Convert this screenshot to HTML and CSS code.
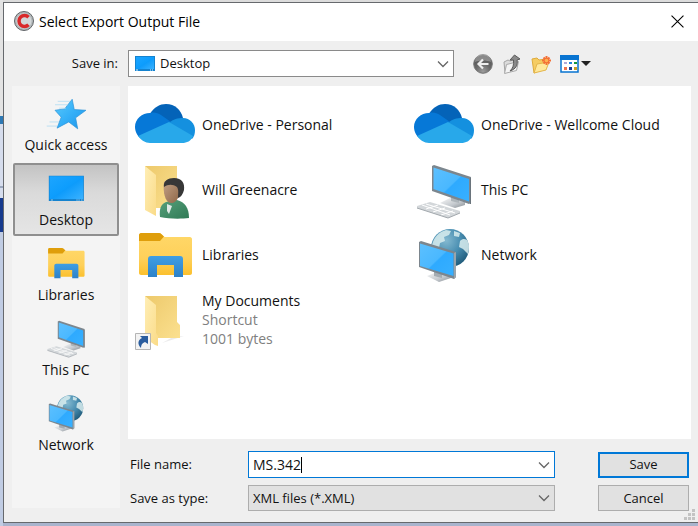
FILE: index.html
```html
<!DOCTYPE html>
<html lang="en">
<head>
<meta charset="utf-8">
<title>Select Export Output File</title>
<link rel="stylesheet" href="styles.css">
</head>
<body>
<svg class="defs" aria-hidden="true">
  <defs>
    <linearGradient id="blue" x1="0" y1="0" x2="1" y2="1"><stop offset="0" stop-color="#1da5ff"/><stop offset=".5" stop-color="#0d9dfd"/><stop offset=".52" stop-color="#0d9bfb"/><stop offset="1" stop-color="#3bb2ff"/></linearGradient>
    <linearGradient id="screen" x1="0" y1="0" x2="1" y2="1"><stop offset="0" stop-color="#5cc0ff"/><stop offset=".5" stop-color="#4ab8ff"/><stop offset=".53" stop-color="#2eaaff"/><stop offset="1" stop-color="#38b0ff"/></linearGradient>
    <linearGradient id="starfill" x1="0" y1="0" x2="1" y2="1"><stop offset="0" stop-color="#5ccafa"/><stop offset=".5" stop-color="#35b0f8"/><stop offset="1" stop-color="#1a93e8"/></linearGradient>
    <linearGradient id="gold" x1="0" y1="0" x2="0" y2="1"><stop offset="0" stop-color="#ffd869"/><stop offset=".6" stop-color="#fed05a"/><stop offset="1" stop-color="#fbc02e"/></linearGradient>
    <linearGradient id="pane" x1="0" y1="0" x2="1" y2="1"><stop offset="0" stop-color="#ffeeb5"/><stop offset="1" stop-color="#fadb88"/></linearGradient>
    <linearGradient id="back" x1="0" y1="0" x2="1" y2="1"><stop offset="0" stop-color="#edc96b"/><stop offset="1" stop-color="#fbe08f"/></linearGradient>
    <linearGradient id="tray" x1="0" y1="0" x2="0" y2="1"><stop offset="0" stop-color="#3f9ee4"/><stop offset="1" stop-color="#2e82c8"/></linearGradient>
    <linearGradient id="metal" x1="0" y1="0" x2="1" y2="1"><stop offset="0" stop-color="#fafafa"/><stop offset=".6" stop-color="#c3c8cd"/><stop offset="1" stop-color="#858b91"/></linearGradient>
    <radialGradient id="globefill" cx=".4" cy=".3" r=".75"><stop offset="0" stop-color="#84b9d0"/><stop offset=".5" stop-color="#4a8fb2"/><stop offset="1" stop-color="#1d5877"/></radialGradient>
    <linearGradient id="skin" x1="0" y1="0" x2="1" y2="1"><stop offset="0" stop-color="#c4a387"/><stop offset="1" stop-color="#8b6344"/></linearGradient>
    <linearGradient id="shirt" x1="0" y1="0" x2="1" y2="1"><stop offset="0" stop-color="#57a07b"/><stop offset="1" stop-color="#2f7a55"/></linearGradient>
    <radialGradient id="ball" cx=".5" cy=".9" r=".8"><stop offset="0" stop-color="#9c9c9c"/><stop offset=".5" stop-color="#6a6a6a"/><stop offset="1" stop-color="#555"/></radialGradient>
  </defs>
  <symbol id="cloud" viewBox="0 0 64 64">
    <path d="M17 21C21 14 27 11 33 11c9 0 15 6 17 14L36 32 17 23z" fill="#0463b8"/>
    <path d="M17 20c4-1 8 0 11 2l10 7-29 17C5 44 2 39 2 34c0-8 7-14 15-14z" fill="#0678d7"/>
    <path d="M50 25c7 0 12 6 12 12 0 4-1 7-3 9L36 30c4-4 9-5 14-5z" fill="#1490df"/>
    <path d="M36 29l24 14c-2 5-6 7-11 7H17c-5 0-9-3-12-7z" fill="#28a8ea"/>
  </symbol>
  <symbol id="folder-open" viewBox="0 0 64 64">
    <path d="M40 49l11-1-22 7z" fill="#ddd" opacity=".6"/>
    <path d="M12 8h32v26l3 3v13H20z" fill="url(#back)"/>
    <path d="M12 8l11 9v28l2 3v10l-3-1-10-7z" fill="url(#pane)"/>
  </symbol>
  <symbol id="user" viewBox="0 0 64 64">
    <path d="M12 8h32v42H20z" fill="url(#back)"/>
    <path d="M12 8l11 9v41l-11-6z" fill="url(#pane)"/>
    <path d="M27 59c-1-8 1-13 6-15l11-2c8 2 12 8 12 18-8 1-20 1-29-1z" fill="url(#shirt)"/>
    <path d="M34 46l5 2-3 8-2-3z" fill="#dfe9e6"/>
    <path d="M31 24c2-3 15-3 17 2 1 5-1 12-5 17-2 2-5 3-8 1-4-4-5-13-4-20z" fill="url(#skin)"/>
    <path d="M31 29c-1-6 4-9 10-9 8 0 11 5 10 12-1 4-3 7-6 8 0-4 1-8-1-11-4-3-9-3-13 0z" fill="#373737"/>
  </symbol>
  <symbol id="libraries" viewBox="0 0 64 64">
    <path d="M6 12c0-1 1-2 2-2h18c3 0 4 4 6 4h25c1 0 2 1 2 2v34c0 1-1 2-2 2H8c-1 0-2-1-2-2z" fill="url(#gold)"/>
    <path d="M6 17v-5c0-1 1-2 2-2h18c2 0 3 2 5 3.500L27 18H6z" fill="#df9e0b"/>
    <path d="M15 54V36c0-2 1-3 3-3h29c2 0 3 1 3 3v18h-9V42H24v12z" fill="url(#tray)"/>
  </symbol>
  <symbol id="pc" viewBox="0 0 64 64">
    <path d="M28 45l10-5 15 4v3l-10 3z" fill="url(#metal)"/>
    <path d="M39 38l8 2v5l-8-2z" fill="#aeb5ba"/>
    <path d="M20 8l2-1 37 12v26l-2 1-37-13z" fill="#7c868e"/>
    <path d="M21.500 9.500L57 21v22.500L21.500 31z" fill="url(#screen)"/>
    <path d="M58 20h1v26l-1 0z" fill="#6a747c"/>
    <path d="M5 48l13-4 30 9v2l-12 5-31-10z" fill="#d3d7da"/>
    <path d="M10 47l28 10M14 46l29 9M14 51l12-4M21 54l12-4M29 57l12-4" stroke="#fff" fill="none"/>
    <path d="M5 50l31 10 12-5" stroke="#a2a8ad" fill="none"/>
  </symbol>
  <symbol id="network" viewBox="0 0 64 64">
    <circle cx="38" cy="25" r="19" fill="url(#globefill)"/>
    <path d="M20 22c2-8 7-13 14-15l5 1-2 4-5 2 1 4-5 2-1 5-5 2zM42 8l6 2-1 4-5-1zM48 18c3-3 5-2 7-1 3 5 2 10 1 14l-5-5-4-2z" fill="#d9edef" opacity=".85"/>
    <path d="M15 53l10-4 14 4v2l-12 4z" fill="url(#metal)"/>
    <path d="M22 48l8 3v4l-8-2z" fill="#a4acb2"/>
    <path d="M7 19l2-1 35 11v25l-2 2L7 44z" fill="#7c868e"/>
    <path d="M8 20.500l33.500 10V53L8 43z" fill="url(#screen)"/>
    <path d="M42 30l2-1v25l-2 2z" fill="#9aa4ab"/>
  </symbol>
  <symbol id="desktop" viewBox="0 0 64 64">
    <path d="M7 14h51v37H7z" fill="#1583cf"/>
    <path d="M8 15h49v33H8z" fill="url(#blue)"/>
    <path d="M10 49.500h3M47 49.500h2M50 49.500h2M54 49.500h2" stroke="#d9f0ff"/>
  </symbol>
  <symbol id="star" viewBox="0 0 64 64">
    <path d="M41 12l3 15 17 1-15 11 3 16-13-10-17 9 6-16-9-10 14-2z" fill="url(#starfill)" stroke="#2a92d8"/>
    <path d="M20 15h18M16 20h19M22 25h10M8 45h14M4 51h15" stroke="#a3d8f2"/>
  </symbol>
  <symbol id="chevron" viewBox="0 0 12 12"><path d="M1 3.500l5 5 5-5" fill="none" stroke="#666" stroke-width="1.300"/></symbol>
</svg>

<div class="window">
  <header class="titlebar">
    <svg class="logo" viewBox="0 0 20 20" aria-hidden="true"><circle cx="10" cy="10" r="9.500" fill="#b4babc" stroke="#626568"/><circle cx="10" cy="10" r="7.500" fill="#d3d7d9"/><path d="M14.500 6.200a5.500 5.500 0 1 0 0 7.600" fill="none" stroke="#d9292b" stroke-width="3.500"/></svg>
    <h1>Select Export Output File</h1>
    <button class="close" type="button" aria-label="Close"><svg viewBox="0 0 12 12"><path d="M.500.500l11 11M11.500.500l-11 11" stroke="#000"/></svg></button>
  </header>

  <form class="dialog">
    <label class="look-label" for="look">Save in:</label>
    <div class="toolbar">
      <div class="combo look">
        <svg class="combo-icon" viewBox="0 0 20 15" aria-hidden="true"><path d="M0 0h20v15H0z" fill="#1583cf"/><path d="M1 1h18v12H1z" fill="url(#blue)"/><path d="M1 14h2M15 14h1M17 14h1" stroke="#d9f0ff"/></svg>
        <select id="look"><option>Desktop</option></select>
        <svg class="arrow" aria-hidden="true"><use href="#chevron"/></svg>
      </div>
      <div class="tools">
        <button type="button" aria-label="Back"><svg viewBox="0 0 20 20"><circle cx="10" cy="10" r="9.300" fill="url(#ball)" stroke="#777"/><path d="M2 8a8 8 0 0 1 16 0c-5-2-11-2-16 0z" fill="#b5b5b5" opacity=".55"/><path d="M15.500 10H6M10 5.500L5.500 10l4.500 4.500" fill="none" stroke="#eee" stroke-width="2.200"/></svg></button>
        <button type="button" aria-label="Up one level"><svg viewBox="0 0 20 20"><path d="M2 8l4-2 2 1 5-2v11l-10 3z" fill="#dcdcdc" stroke="#a5a5a5"/><path d="M2.500 19.500l2-9 12-3-2 9z" fill="#f4f4f4" stroke="#aaa"/><path d="M8 17c3-3 4-6 3.500-11H8l4.500-5L18 5l-3 1c1 5-1 9-7 11z" fill="#8a8a8a" stroke="#5a5a5a"/></svg></button>
        <button type="button" aria-label="New folder"><svg viewBox="0 0 20 20"><path d="M1 5l5-1 2 2 7-1v9L3 19z" fill="#f5cc62" stroke="#dfab3b"/><path d="M3 19l3-9 12-2-3 8z" fill="#ffe89a" stroke="#e4b64b"/><g stroke="#f37036" stroke-width="2"><path d="M15.500 2v9M11 6.500h9M12.500 3.500l6 6M18.500 3.500l-6 6"/></g><circle cx="15.500" cy="6.500" r="1.800" fill="#ffb052"/></svg></button>
        <button class="view" type="button" aria-label="View menu"><svg class="grid-icon" viewBox="0 0 20 20"><path d="M1 2h17v16H1z" fill="#fff" stroke="#0874d1" stroke-width="1.500"/><path d="M0 1h19v5H0z" fill="#0874d1"/><path d="M4 8h3v2H4z" fill="#b2a8d7"/><path d="M9 8h3v2H9z" fill="#2183dc"/><path d="M14 8h3v2h-3z" fill="#17993c"/><path d="M4 13h3v3H4z" fill="#ef744f"/><path d="M9 13h3v3H9z" fill="#163b94"/><path d="M14 13h3v3h-3z" fill="#c79e25"/></svg><svg class="drop" viewBox="0 0 10 5"><path d="M0 0h10L5 5z" fill="#222"/></svg></button>
      </div>
    </div>

    <nav class="places" aria-label="Places">
      <button type="button"><svg><use href="#star"/></svg>Quick access</button>
      <button type="button" class="active"><svg><use href="#desktop"/></svg>Desktop</button>
      <button type="button"><svg><use href="#libraries"/></svg>Libraries</button>
      <button type="button"><svg><use href="#pc"/></svg>This PC</button>
      <button type="button"><svg><use href="#network"/></svg>Network</button>
    </nav>

    <main class="content">
      <ul class="files">
        <li><svg><use href="#cloud"/></svg><span>OneDrive - Personal</span></li>
        <li><svg><use href="#cloud"/></svg><span>OneDrive - Wellcome Cloud</span></li>
        <li><svg><use href="#user"/></svg><span>Will Greenacre</span></li>
        <li><svg><use href="#pc"/></svg><span>This PC</span></li>
        <li><svg><use href="#libraries"/></svg><span>Libraries</span></li>
        <li><svg><use href="#network"/></svg><span>Network</span></li>
        <li><svg viewBox="0 0 64 64"><use href="#folder-open"/><path d="M2.500 45.500h15v16h-15z" fill="#f3f3f3" stroke="#b5b5b5"/><path d="M7 48h8v8l-3-2c-3 1-4 3-4 6-4-4-3-8 1-10z" fill="#2b5d9e"/></svg><span>My Documents<small>Shortcut</small><small>1001 bytes</small></span></li>
      </ul>
      <div class="fields">
        <label for="filename">File name:</label>
        <div class="combo name">
          <input id="filename" type="text" value="MS.342"><span class="caret"></span>
          <svg class="arrow" aria-hidden="true"><use href="#chevron"/></svg>
        </div>
        <button class="action save" type="submit">Save</button>
        <label for="filetype">Save as type:</label>
        <div class="combo type">
          <select id="filetype"><option>XML files (*.XML)</option></select>
          <svg class="arrow" aria-hidden="true"><use href="#chevron"/></svg>
        </div>
        <button class="action" type="button">Cancel</button>
      </div>
    </main>
  </form>
  <svg class="grip" viewBox="0 0 11 11" aria-hidden="true"><path d="M8 0h3v3H8zM4 4h3v3H4zM8 4h3v3H8zM0 8h3v3H0zM4 8h3v3H4zM8 8h3v3H8z" fill="#c3c3c3"/></svg>
</div>
</body>
</html>
```
FILE: styles.css
```css
* { box-sizing: border-box; }

body {
  margin: 0;
  min-height: 100vh;
  display: flex;
  padding: 2px 0 3px 3px;
  font: 14px/19px "Open Sans", "Noto Sans", sans-serif;
  color: #111;
  background:
    linear-gradient(#e3e3e3 0 116px, #2d78b4 116px 124px, #d6dded 124px 186px, #9aa6bd 186px 188px, #d6dded 188px 198px, #173b8e 198px 232px, #c0cce3 232px 100%) 0 0 / 3px 100% no-repeat,
    linear-gradient(#dcdcdc 0 50%, #a9b4cd 50%);
}

button, select, input { font: inherit; color: inherit; }
button { border: 0; padding: 0; background: none; }
svg { display: block; flex: none; }
.defs { position: absolute; width: 0; height: 0; }

.window {
  position: relative;
  flex: 1;
  display: flex;
  flex-direction: column;
  background: #efefef;
  border: 1px solid #66696d;
  border-right: 0;
}

.titlebar {
  display: flex;
  align-items: center;
  height: 38px;
  padding: 0 14px 2px 10px;
  gap: 5px;
  background: #fff;
}
.logo { width: 20px; height: 20px; }
h1 { margin: 0; flex: 1; font-size: 14px; font-weight: 400; color: #000; }
.close svg { width: 13px; height: 13px; }

.dialog {
  flex: 1;
  display: grid;
  grid-template-columns: 108px 1fr;
  grid-template-rows: 45px 1fr;
  column-gap: 8px;
  padding: 0 7px 14px 8px;
}

.look-label { align-self: center; text-align: right; padding-right: 2px; }
.look-label, .combo, .fields, .action { font-size: 13px; }

.toolbar { display: flex; align-items: center; gap: 19px; }
.combo {
  display: flex;
  align-items: center;
  height: 27px;
  padding: 0 4px;
  background: #fff;
  border: 1px solid #8a8a8a;
}
.combo select {
  flex: 1;
  min-width: 0;
  appearance: none;
  border: 0;
  padding: 0;
  background: none;
  outline: 0;
}
.arrow { width: 12px; height: 12px; }
.look { flex: 0 1 326px; padding-left: 6px; gap: 5px; }
.combo-icon { width: 20px; height: 15px; }

.tools { display: flex; align-items: center; gap: 9px; }
.tools svg { width: 20px; height: 20px; }
.tools .view { display: flex; align-items: center; gap: 1px; }
.tools .drop { width: 10px; height: 5px; }

.places {
  display: flex;
  flex-direction: column;
  gap: 2px;
  padding: 2px 1px;
  background: #f4f4f4;
}
.places button {
  display: flex;
  flex-direction: column;
  align-items: center;
  height: 73px;
  padding-top: 2px;
  border: 1px solid transparent;
}
.places svg { width: 44px; height: 44px; }
.places .active {
  border: 2px solid #8f8f8f;
  border-radius: 2px;
  padding-top: 1px;
  background: linear-gradient(#c3c3c3, #dadada 40%, #e5e5e5);
}

.content { display: flex; flex-direction: column; }
.files {
  flex: 1;
  display: grid;
  grid-template-columns: 1fr 1fr;
  grid-auto-rows: 65px;
  margin: 0;
  padding: 6px 0 0 5px;
  list-style: none;
  background: #fff;
}
.files li { display: flex; align-items: center; gap: 5px; }
.files svg { width: 64px; height: 64px; }
.files small { display: block; font-size: 14px; color: #808080; }

.fields {
  display: grid;
  grid-template-columns: 118px 307px 1fr;
  grid-template-rows: 27px 26px;
  align-items: center;
  gap: 7px 2px;
  padding: 12px 2px 0 0;
  margin-bottom: -3px;
}
.fields label { padding-left: 2px; }
.name { border-color: #0078d7; }
.name input {
  field-sizing: content;
  border: 0;
  padding: 0;
  outline: 0;
  font-size: 14px;
  background: none;
}
.name .arrow { margin-left: auto; }
.caret { width: 1px; height: 16px; background: #000; }
.type { height: 26px; background: #e1e1e1; border-color: #adadad; }

.action {
  justify-self: end;
  width: 91px;
  height: 26px;
  background: #e1e1e1;
  border: 1px solid #adadad;
}
.save { border: 2px solid #0078d7; }

.grip { position: absolute; right: 3px; bottom: 2px; width: 11px; height: 11px; }
```
